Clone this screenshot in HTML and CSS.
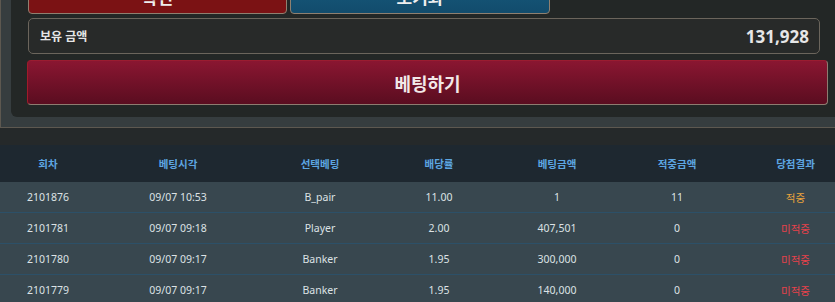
FILE: index.html
```html
<!DOCTYPE html>
<html lang="ko">
<head>
    <meta charset="UTF-8">
    <meta name="viewport" content="width=device-width, initial-scale=1.0">
    <title>베팅</title>
    <link rel="stylesheet" href="styles.css">
</head>
<body>
<div class="page">

    <!-- 베팅 패널 -->
    <div class="bet-wrap">
        <div class="bet-panel">
            <div class="pick-row">
                <button class="pick pick-red">확인</button>
                <button class="pick pick-blue">초기화</button>
            </div>
            <div class="balance">
                <span class="balance-label">보유 금액</span>
                <span class="balance-value">131,928</span>
            </div>
            <button class="bet-btn">베팅하기</button>
        </div>
    </div>

    <!-- 베팅 내역 -->
    <table class="history">
        <colgroup>
            <col style="width:96px">
            <col style="width:164px">
            <col style="width:120px">
            <col style="width:118px">
            <col style="width:118px">
            <col style="width:122px">
            <col>
        </colgroup>
        <thead>
            <tr>
                <th>회차</th><th>베팅시각</th><th>선택베팅</th><th>배당률</th><th>베팅금액</th><th>적중금액</th><th>당첨결과</th>
            </tr>
        </thead>
        <tbody>
            <tr>
                <td>2101876</td><td>09/07 10:53</td><td>B_pair</td><td>11.00</td><td>1</td><td>11</td><td class="win">적중</td>
            </tr>
            <tr>
                <td>2101781</td><td>09/07 09:18</td><td>Player</td><td>2.00</td><td>407,501</td><td>0</td><td class="lose">미적중</td>
            </tr>
            <tr>
                <td>2101780</td><td>09/07 09:17</td><td>Banker</td><td>1.95</td><td>300,000</td><td>0</td><td class="lose">미적중</td>
            </tr>
            <tr>
                <td>2101779</td><td>09/07 09:17</td><td>Banker</td><td>1.95</td><td>140,000</td><td>0</td><td class="lose">미적중</td>
            </tr>
        </tbody>
    </table>

</div>
</body>
</html>
```

FILE: styles.css
```css
body {
    margin: 0;
    padding: 0;
    background: #25292a;
    overflow: hidden;
    font-family: "Noto Sans", "Noto Sans CJK KR", sans-serif;
}

.page {
    width: 853px;
}

/* 상단 베팅 영역 */
.bet-wrap {
    background: #363d3f;
    border-left: 1px solid #5d5850;
    border-bottom: 1px solid #5d5850;
    padding: 0 0 10px 10px;
}

.bet-panel {
    background: #232726;
    border-bottom-left-radius: 6px;
    padding: 0 25px 12px 16px;
    display: flex;
    flex-direction: column;
}

.pick-row {
    display: flex;
    gap: 3px;
    margin: -22px 0 0 1px;
}

.pick {
    width: 260px;
    height: 36px;
    border: 1px solid #8f8070;
    border-radius: 4px;
    color: #eeeeee;
    font-family: inherit;
    font-size: 17px;
    font-weight: bold;
    padding: 0;
}

.pick-red {
    width: 259px;
    background: #7b1214;
}

.pick-blue {
    background: linear-gradient(#175a7e, #124c6c);
}

.balance {
    margin: 4px 8px 0 1px;
    height: 34px;
    border: 1px solid #6b655c;
    border-radius: 5px;
    background: #282a29;
    display: flex;
    align-items: center;
    justify-content: space-between;
    padding: 0 10px 0 11px;
    color: #e6e6e6;
    font-weight: bold;
}

.balance-label {
    font-size: 12px;
}

.balance-value {
    font-size: 17px;
}

.bet-btn {
    margin-top: 6px;
    height: 45px;
    border: 1px solid #8e7c70;
    border-left-color: #a01b2a;
    border-top-color: #9a1c30;
    border-radius: 4px;
    background: linear-gradient(#8a1631, #5a0d20);
    color: #f2e8e8;
    font-family: inherit;
    font-size: 18px;
    font-weight: bold;
    padding: 0;
}

/* 베팅 내역 */
.history {
    margin-top: 17px;
    width: 853px;
    table-layout: fixed;
    border-collapse: collapse;
    font-size: 10.5px;
}

.history th {
    background: #1e2830;
    color: #5da6e2;
    font-weight: bold;
    height: 37px;
    padding: 0;
    text-align: center;
}

.history td {
    background: #38474f;
    color: #dde2e5;
    height: 30px;
    padding: 0;
    text-align: center;
    border-bottom: 1px solid #2c5068;
}

.history .win {
    color: #e9a33c;
}

.history .lose {
    color: #e8414b;
}
```
